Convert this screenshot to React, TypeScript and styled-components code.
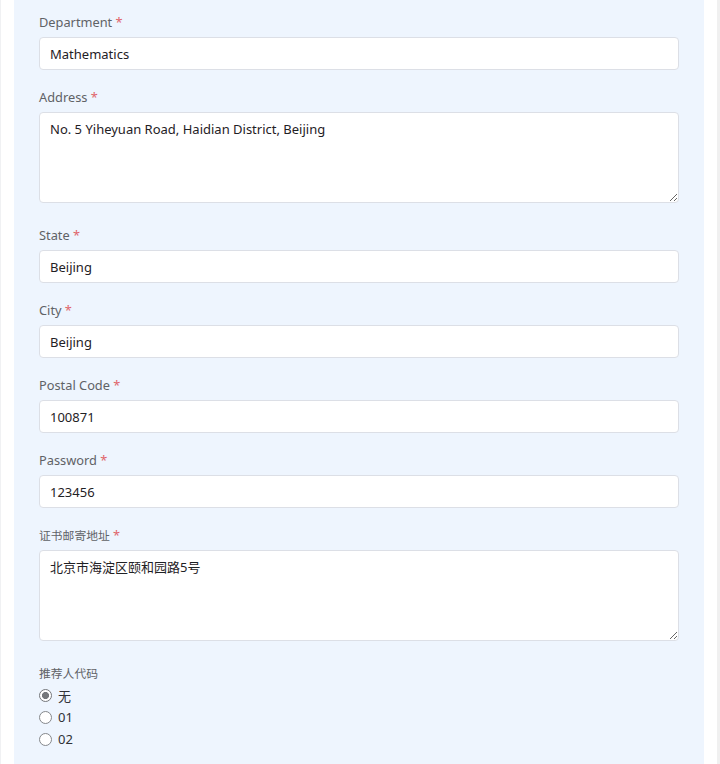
import React from "react"
import { createGlobalStyle, styled } from "styled-components"

const GlobalStyle = createGlobalStyle`
  html, body {
    margin: 0;
    padding: 0;
    background: #ffffff;
  }
  body {
    font-family: "Noto Sans", "Noto Sans CJK SC", sans-serif;
  }
`

interface Field {
  label: string
  value: string
  required?: boolean
  multiline?: boolean
  cjk?: boolean
}

const fields: Field[] = [
  { label: "Department", value: "Mathematics", required: true },
  {
    label: "Address",
    value: "No. 5 Yiheyuan Road, Haidian District, Beijing",
    required: true,
    multiline: true,
  },
  { label: "State", value: "Beijing", required: true },
  { label: "City", value: "Beijing", required: true },
  { label: "Postal Code", value: "100871", required: true },
  { label: "Password", value: "123456", required: true },
  {
    label: "证书邮寄地址",
    value: "北京市海淀区颐和园路5号",
    required: true,
    multiline: true,
    cjk: true,
  },
]

const referrers = ["无", "01", "02"]

const App: React.FC = () => {
  return (
    <>
      <GlobalStyle />
      <Page>
        <Panel>
          {fields.map((f) => (
            <FormItem key={f.label} $multiline={f.multiline}>
              <Label $cjk={f.cjk}>
                {f.label}
                {f.required && <Star> *</Star>}
              </Label>
              {f.multiline ? (
                <TextArea defaultValue={f.value} />
              ) : (
                <Input defaultValue={f.value} />
              )}
            </FormItem>
          ))}
          <FormItem>
            <Label $cjk>推荐人代码</Label>
            <RadioGroup>
              {referrers.map((r, i) => (
                <RadioRow key={r}>
                  <RadioInput
                    type="radio"
                    name="referrer"
                    defaultChecked={i === 0}
                  />
                  <RadioText>{r}</RadioText>
                </RadioRow>
              ))}
            </RadioGroup>
          </FormItem>
        </Panel>
        <Scrollbar />
      </Page>
    </>
  )
}

const Page = styled.div`
  display: flex;
  min-height: 764px;
  padding-left: 14px;
  box-sizing: border-box;
  border-left: 1px solid #f0f1f3;
`

const Panel = styled.div`
  width: 690px;
  margin-left: -1px;
  background: #eef5fe;
  padding: 13px 25px 0;
  box-sizing: border-box;
`

const Scrollbar = styled.div`
  margin-left: auto;
  width: 3px;
  background: #f0f0f0;
`

const FormItem = styled.div<{ $multiline?: boolean }>`
  margin-bottom: ${({ $multiline }) => ($multiline ? "23px" : "18px")};
`

const Label = styled.div<{ $cjk?: boolean }>`
  font-size: ${({ $cjk }) => ($cjk ? "11.8px" : "12.8px")};
  line-height: 18px;
  color: #5f6266;
  margin-bottom: 6px;
`

const Star = styled.span`
  color: #e0646a;
  font-size: 12.8px;
`

const controlBase = `
  display: block;
  width: 100%;
  box-sizing: border-box;
  border: 1px solid #dcdfe6;
  border-radius: 4px;
  background: #ffffff;
  font-family: "Noto Sans", "Noto Sans CJK SC", sans-serif;
  font-size: 13px;
  color: #1f2125;
  padding: 0 10px;
  outline: none;
`

const Input = styled.input`
  ${controlBase}
  height: 33px;
`

const TextArea = styled.textarea`
  ${controlBase}
  height: 91px;
  padding-top: 6px;
  line-height: 20px;
  resize: vertical;
`

const RadioGroup = styled.div`
  display: flex;
  flex-direction: column;
  margin-top: -4px;
`

const RadioRow = styled.label`
  display: flex;
  align-items: center;
  height: 22px;
  gap: 6px;
`

const RadioInput = styled.input`
  appearance: none;
  flex: none;
  margin: 0;
  width: 13px;
  height: 13px;
  border: 1px solid #85888c;
  border-radius: 50%;
  background: #ffffff;
  box-sizing: border-box;

  &:checked {
    border-color: #75777b;
    background: radial-gradient(circle, #75777b 0 3.3px, #ffffff 3.8px);
  }
`

const RadioText = styled.span`
  font-size: 13px;
  color: #303236;
`

export default App
